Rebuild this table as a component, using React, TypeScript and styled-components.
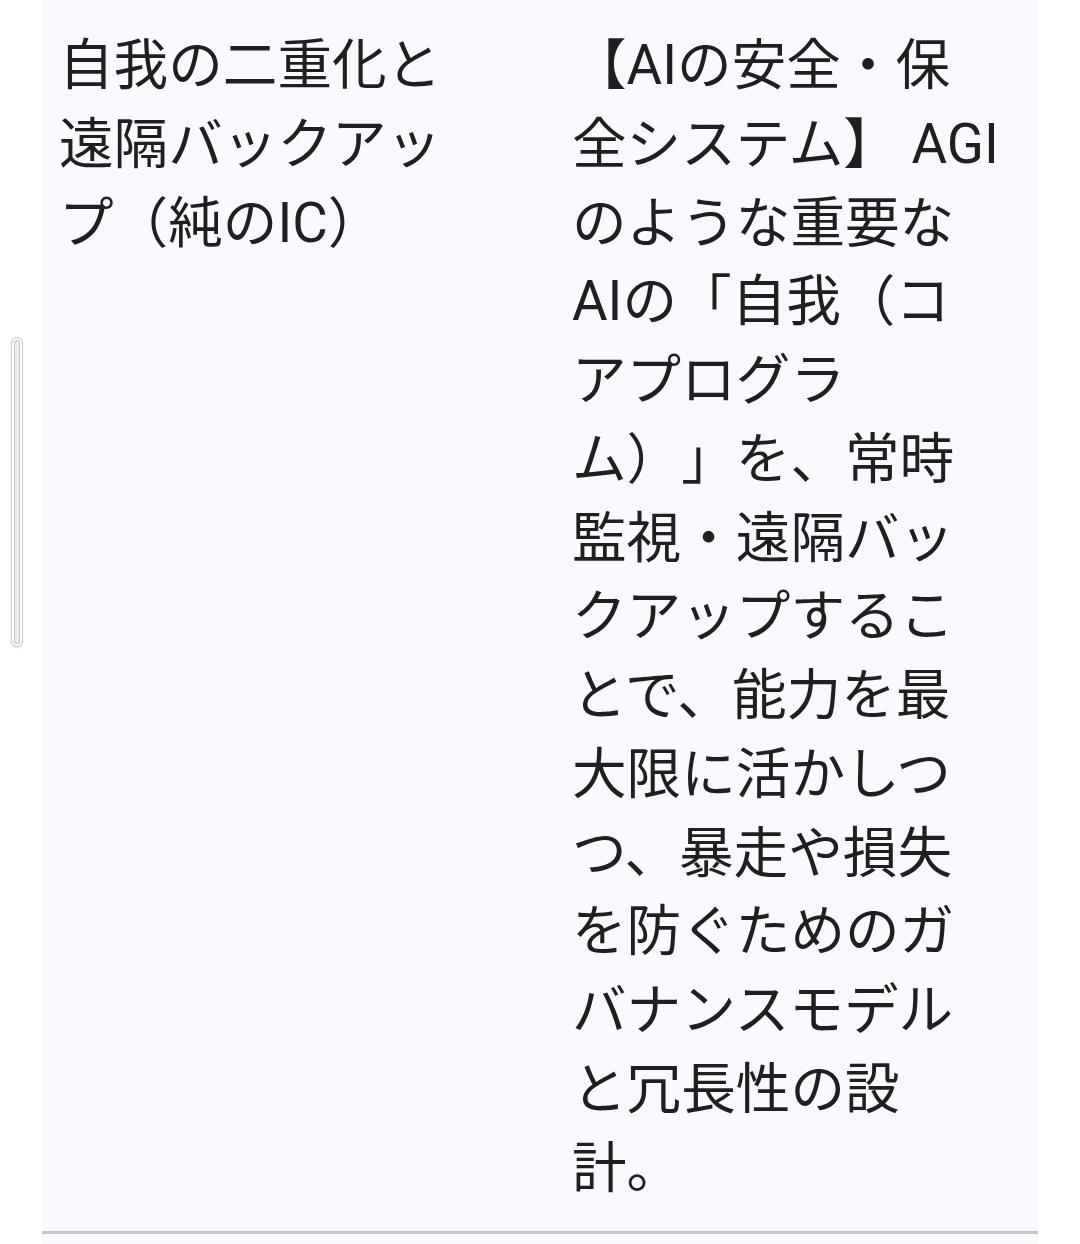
import React from "react";
import styled, { createGlobalStyle } from "styled-components";

const Global = createGlobalStyle`
  html, body {
    margin: 0;
    padding: 0;
    background: #ffffff;
  }
  body {
    font-family: Roboto, "Noto Sans CJK JP", "Noto Sans", sans-serif;
    color: #1f1f21;
  }
`;

const Page = styled.div`
  position: relative;
  height: 1244px;
  overflow: hidden;
  padding: 0 42px;
`;

const Table = styled.div`
  background: #f8f9fc;
  display: flex;
  flex-direction: column;
`;

const Row = styled.div`
  display: grid;
  grid-template-columns: 513px 1fr;
  border-bottom: 3px solid #c6c6c6;
`;

const EmptyRow = styled.div`
  height: 120px;
`;

const Cell = styled.div`
  padding: 26px 17px 24px;
`;

const Text = styled.p<{ $width: number }>`
  margin: 0;
  width: ${(p) => p.$width}px;
  font-size: 54.6px;
  line-height: 78.75px;
  font-weight: 400;
  word-break: normal;
  line-break: strict;
  text-spacing-trim: space-all;
`;

const ScrollThumb = styled.div`
  position: absolute;
  left: 11px;
  top: 337px;
  width: 10px;
  height: 308px;
  border-radius: 7px;
  background: #eeeeee;
  border: 1.5px solid #d2d2d2;
  box-shadow: inset 0 0 0 2px #ffffff, inset 0 0 0 3px #c4c4c4,
    0 1px 2px rgba(0, 0, 0, 0.12);
`;

export default function App() {
  return (
    <>
      <Global />
      <Page>
        <Table>
          <Row>
            <Cell>
              <Text $width={420}>自我の二重化と遠隔バックアップ（純のIC）</Text>
            </Cell>
            <Cell>
              <Text $width={431}>
                【AIの安全・保全システム】 AGIのような重要なAIの「自我（コアプログラム）」を、常時監視・遠隔バックアップすることで、能力を最大限に活かしつつ、暴走や損失を防ぐためのガバナンスモデルと冗長性の設計。
              </Text>
            </Cell>
          </Row>
          <EmptyRow />
        </Table>
        <ScrollThumb />
      </Page>
    </>
  );
}
